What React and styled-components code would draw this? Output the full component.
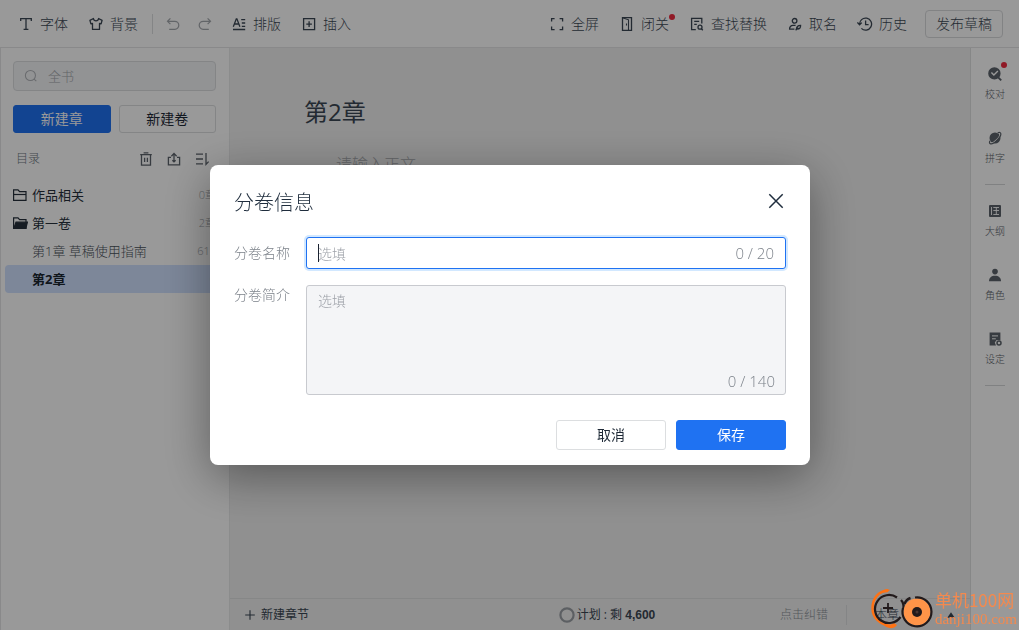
import React, { useState } from "react";
import styled, { createGlobalStyle, css } from "styled-components";

const GlobalStyle = createGlobalStyle`
  * {
    box-sizing: border-box;
  }

  body {
    margin: 0;
    background: #fff;
    color: #3b4754;
    font-family: "Open Sans", "Noto Sans CJK SC", sans-serif;
    font-size: 14px;
    font-weight: 300;
    line-height: 20px;
  }

  button, input, textarea {
    font: inherit;
    color: inherit;
    margin: 0;
  }

  button {
    padding: 0;
    border: none;
    background: none;
    cursor: pointer;
    white-space: nowrap;
  }
`;

/* ---------- layout ---------- */

const Page = styled.div`
  display: flex;
  flex-direction: column;
  min-height: 100vh;
`;

const Toolbar = styled.header`
  display: flex;
  align-items: center;
  justify-content: space-between;
  height: 48px;
  padding: 0 16px 0 18px;
  border-bottom: 1px solid #e4e5e6;
`;

const Group = styled.div`
  display: flex;
  align-items: center;
  gap: ${(props) => props.$gap ?? 20}px;
`;

const ToolButton = styled.button`
  position: relative;
  display: flex;
  align-items: center;
  gap: 6px;
  height: 28px;
  color: ${(props) => (props.$muted ? "#a4a8ad" : "#3b4754")};
`;

const ToolDivider = styled.span`
  width: 1px;
  height: 20px;
  margin: 0 12px 0 14px;
  background: #dcdedf;
`;

const PublishButton = styled.button`
  width: 78px;
  height: 28px;
  border: 1px solid #d9dbdd;
  border-radius: 4px;
`;

const Dot = styled.i`
  position: absolute;
  top: 4px;
  right: -6px;
  width: 6px;
  height: 6px;
  border-radius: 50%;
  background: #f02c40;
`;

const Body = styled.div`
  display: flex;
  flex: 1;
`;

/* ---------- sidebar ---------- */

const Sidebar = styled.aside`
  width: 230px;
  padding: 13px 0 0 4px;
  border-left: 1px solid #e4e5e6;
  border-right: 1px solid #e8e9ea;
`;

const SidebarTop = styled.div`
  padding: 0 13px 0 8px;
`;

const SearchBox = styled.label`
  display: flex;
  align-items: center;
  gap: 10px;
  height: 30px;
  padding: 0 10px;
  border: 1px solid #dcdee0;
  border-radius: 4px;
  background: #f4f5f7;
  color: #b0b3b8;

  input {
    width: 100%;
    min-width: 0;
    padding: 0;
    border: none;
    outline: none;
    background: none;
    font-size: 13px;
  }

  input::placeholder {
    color: #a3a7ac;
    opacity: 1;
  }
`;

const CreateRow = styled.div`
  display: flex;
  gap: 8px;
  margin-top: 14px;
`;

const Button = styled.button`
  flex: 1;
  height: ${(props) => props.$height || 28}px;
  border: 1px solid #dcdee0;
  border-radius: 3px;
  background: #fff;
  color: #1f2a37;
  font-weight: 400;

  ${(props) =>
    props.$primary &&
    css`
      border-color: #1f72f2;
      background: #1f72f2;
      color: #fff;
    `}
`;

const CatalogHead = styled.div`
  display: flex;
  align-items: center;
  justify-content: space-between;
  height: 28px;
  margin: 12px 0 8px;
  padding: 0 6px 0 3px;
  font-size: 12px;
  color: #70777f;
`;

const IconButton = styled.button`
  display: flex;
  color: #5c636b;
`;

const List = styled.ul`
  margin: 0;
  padding: 0;
  list-style: none;
`;

const Row = styled.li`
  display: grid;
  grid-template-columns: 16px 1fr auto;
  align-items: center;
  gap: 4px;
  height: 28px;
  padding: 0 13px 0 7px;
  border-radius: 4px 0 0 4px;
  font-size: 13px;
  font-weight: ${(props) => (props.$chapter ? 300 : 400)};
  color: ${(props) => (props.$chapter ? "#4a525b" : "#26303b")};

  small {
    font-size: 11px;
    font-weight: 300;
    color: #a0a4a9;
  }

  ${(props) =>
    props.$active &&
    css`
      background: #d0e1ff;
      color: #1a2530;
      font-weight: 700;
    `}
`;

/* ---------- editor ---------- */

const Editor = styled.main`
  display: flex;
  flex: 1;
  flex-direction: column;
  background: #f0f0f0;
`;

const Paper = styled.article`
  flex: 1;
  padding: 46px 74px 0;

  h1 {
    margin: 0;
    font-size: 24px;
    font-weight: 400;
    line-height: 36px;
    color: #3b4754;
  }

  p {
    margin: 21px 0 0;
    font-size: 16px;
    line-height: 26px;
    text-indent: 2em;
    color: #a8abaf;
  }
`;

const StatusBar = styled.footer`
  display: grid;
  grid-template-columns: 1fr auto 1fr;
  align-items: center;
  height: 32px;
  padding-left: 14px;
  border-top: 1px solid #e0e1e2;
  font-size: 12px;

  b {
    font-family: "Liberation Sans", sans-serif;
    font-weight: 700;
  }
`;

const StatusButton = styled.button`
  display: flex;
  align-items: center;
  gap: ${(props) => props.$gap || 5}px;
  font-weight: 400;
`;

const StatusEnd = styled.div`
  display: flex;
  align-items: center;
  justify-content: flex-end;
  gap: 18px;
  color: #3b4754;

  a {
    color: #8d9298;
    text-decoration: none;
  }

  i {
    width: 1px;
    height: 20px;
    background: #dcdedf;
  }
`;

const ChapterCount = styled.button`
  display: flex;
  justify-content: space-between;
  align-items: center;
  width: 105px;
  padding: 0 14px 0 10px;
`;

/* ---------- right rail ---------- */

const Rail = styled.nav`
  width: 49px;
  padding-top: 18px;
  border-left: 1px solid #e0e1e2;

  hr {
    width: 20px;
    height: 1px;
    margin: 19px auto 18px;
    border: none;
    background: #d5d7d9;
  }
`;

const RailButton = styled.button`
  position: relative;
  display: flex;
  flex-direction: column;
  align-items: center;
  gap: 6px;
  width: 20px;
  margin: 0 auto;
  font-size: 10px;
  line-height: 13px;
  color: #5c636b;

  & + & {
    margin-top: 29px;
  }

  ${Dot} {
    top: -4px;
    right: -2px;
  }
`;

/* ---------- dialog ---------- */

const Overlay = styled.div`
  position: fixed;
  inset: 0;
  display: flex;
  align-items: center;
  justify-content: center;
  padding-left: 1px;
  background: rgba(0, 0, 0, 0.4);
`;

const Dialog = styled.form`
  width: 600px;
  max-width: 100%;
  padding: 23px 24px 15px;
  border-radius: 8px;
  background: #fff;
  box-shadow: 0 12px 48px rgba(0, 0, 0, 0.4);
`;

const DialogHead = styled.div`
  display: flex;
  align-items: flex-start;
  justify-content: space-between;
  margin-bottom: 19px;
  padding-right: 2px;

  h2 {
    margin: 0;
    font-size: 20px;
    font-weight: 300;
    line-height: 30px;
    color: #1f2d3d;
  }

  button {
    padding-top: 5px;
    color: #1f2d3d;
  }
`;

const Field = styled.div`
  display: grid;
  grid-template-columns: 72px 1fr;
  margin-bottom: 16px;

  label {
    padding-top: ${(props) => (props.$multiline ? 0 : 6)}px;
    color: #7c828a;
  }
`;

const Control = styled.div`
  position: relative;
  display: flex;

  input,
  textarea {
    display: block;
    width: 100%;
    border: 1px solid #c8cacf;
    border-radius: 3px;
    outline: none;
    background: #f4f5f7;
    resize: none;
  }

  input {
    height: 32px;
    padding: 0 60px 0 11px;
    border-color: #1f72f2;
    background: #fff;
    box-shadow: 0 0 0 2px #d2e8ff;
  }

  textarea {
    height: 110px;
    padding: 5px 11px;
  }

  ::placeholder {
    color: #9ea2a9;
    opacity: 1;
  }
`;

const Counter = styled.span`
  position: absolute;
  right: ${(props) => (props.$low ? 11 : 12)}px;
  bottom: ${(props) => (props.$low ? 4 : 6)}px;
  font-size: 15px;
  color: #7c828a;
`;

const Caret = styled.span`
  position: absolute;
  top: 7px;
  left: 12px;
  width: 1px;
  height: 18px;
  background: #1a2230;
`;

const Actions = styled.div`
  display: flex;
  justify-content: flex-end;
  gap: 10px;
  padding-top: 9px;

  button {
    flex: 0 0 110px;
  }
`;

/* ---------- site mark ---------- */

const SiteMark = styled.div`
  position: fixed;
  right: 2px;
  bottom: 0;
  display: flex;
  align-items: center;
  color: #f4894e;
  white-space: nowrap;

  strong {
    display: block;
    font: 400 17px/20px "Noto Sans CJK SC", sans-serif;
  }

  span {
    display: block;
    font: 400 15px/18px "Liberation Serif", serif;
  }
`;

/* ---------- icons ---------- */

const Icon = ({ size = 16, width = 1.3, children }) => (
  <svg
    width={size}
    height={size}
    viewBox="0 0 16 16"
    fill="none"
    stroke="currentColor"
    strokeWidth={width}
    aria-hidden="true"
  >
    {children}
  </svg>
);

const FontIcon = () => (
  <Icon>
    <path d="M2.7 5V2.7h10.6V5M8 2.7v10.8M5.6 13.4h4.8" />
  </Icon>
);

const ShirtIcon = () => (
  <Icon>
    <path
      strokeLinejoin="round"
      d="M5.4 2.5 1.9 4.4l1 3.4 1.6-.4v6h7v-6l1.6.4 1-3.4-3.5-1.9C10.200 5.600 5.800 5.600 5.400 2.500Z"
    />
  </Icon>
);

const UndoIcon = () => (
  <Icon width={1.2}>
    <path d="M5.4 2.4 2.5 5.3l2.9 2.9M2.6 5.3h7.2a4 4 0 0 1 0 8H4.2" />
  </Icon>
);

const RedoIcon = () => (
  <Icon width={1.2}>
    <path d="m10.6 2.4 2.9 2.9-2.9 2.9M13.4 5.3H6.2a4 4 0 0 0 0 8h5.6" />
  </Icon>
);

const TypesetIcon = () => (
  <Icon>
    <path d="m2.3 10.8 3-8h.6l3 8M3.4 8h4.4M10.2 3.6h4M10.8 7h3.4M10.8 10.3h3.4M2 13.5h12.2" />
  </Icon>
);

const InsertIcon = () => (
  <Icon>
    <path d="M2.6 2.6h11v11h-11zM8.1 5.3v5.6M5.3 8.1h5.6" />
  </Icon>
);

const FullscreenIcon = () => (
  <Icon>
    <path d="M2.6 5.6V2.6h3M10.6 2.6h3v3M13.6 10.6v3h-3M5.6 13.6h-3v-3" />
  </Icon>
);

const DoorIcon = () => (
  <Icon>
    <path d="M3.500 1.600h9v12.800h-9z" />
    <path d="m3.600 1.800 5.900 2v10.500M7.500 7.500v2" strokeWidth="1.100" />
  </Icon>
);

const FindIcon = () => (
  <Icon>
    <path d="M6.8 13.6H2.6V2.4h10.2v5M5.2 5.4h5M5.2 8.4h2.6" />
    <circle cx="11" cy="11.2" r="2" />
    <path d="m12.4 12.7 1.4 1.5" />
  </Icon>
);

const NamingIcon = () => (
  <Icon>
    <circle cx="7.6" cy="4.8" r="2.3" />
    <path d="M8.6 9.4H6a3.4 3.4 0 0 0-3.4 3.8h4.800M9.4 13.2c0-2.5 1.500-3.800 4.200-3.900.1 2.200-.9 3.800-3.200 3.800M8.600 14.200l2.600-2.600" />
  </Icon>
);

const HistoryIcon = () => (
  <Icon>
    <path d="M2.6 8.6A6 6 0 1 1 4.4 12.4M.4 6.4l2.2 2.4 2.2-2.2M8.6 4.6v4h3" />
  </Icon>
);

const SearchIcon = () => (
  <Icon width={1.2}>
    <circle cx="7.4" cy="7.4" r="5.8" />
    <path d="m11.6 11.6 2.6 2.4" />
  </Icon>
);

const TrashIcon = () => (
  <Icon>
    <path d="M2.2 3.6h11.6M5.6 1.8h4.8M3.5 3.6v10.6h9V3.6M6.6 6.8v4.2M9.4 6.8v4.2" />
  </Icon>
);

const ExportIcon = () => (
  <Icon>
    <path d="M5 6.4H2.4v7.4h11.2V6.4H11M8 10.8V3M5.4 5.2 8 2.4l2.6 2.8M6.4 9.2 8 10.8l1.6-1.6" />
  </Icon>
);

const SortIcon = () => (
  <Icon>
    <path d="M2 3.2h7M2 8h7M2 12.8h7M12 2v11.4l2.6-2.8" />
  </Icon>
);

const FolderIcon = ({ open }) => (
  <Icon width={1.2}>
    <path d="M1.600 13.400V2.800h4.400l1.600 1.800h6.400v8.800z" />
    {open ? (
      <path d="M4 7.200h11.400l-1.600 6.200H1.800z" fill="currentColor" />
    ) : (
      <path d="M1.600 7.500h12.400" />
    )}
  </Icon>
);

const ProofIcon = () => (
  <Icon>
    <path
      fill="currentColor"
      stroke="none"
      fillRule="evenodd"
      d="M7.4 1.2a6.2 6.2 0 1 1 0 12.4 6.2 6.2 0 0 1 0-12.4ZM3.9 7l3 3 4.5-4.5-1-1-3.5 3.5-2-2z"
    />
    <path d="m11.2 11.4 3 3" strokeWidth="2" />
  </Icon>
);

const PlanetIcon = () => (
  <Icon>
    <circle cx="8" cy="8" r="5.500" fill="currentColor" stroke="none" />
    <g transform="rotate(-45 8 8)">
      <path d="M1.600 8.600c1.800 2.400 11 2.400 12.800 0" stroke="#fff" strokeWidth="1" />
      <path
        strokeWidth="1.200"
        d="M2.500 6.300C.6 7 .2 8 .8 9c1.600 2.700 12.800 2.700 14.400 0 .6-1 .2-2-1.700-2.700"
      />
    </g>
  </Icon>
);

const OutlineIcon = () => (
  <Icon>
    <rect x="2" y="2" width="12" height="12" rx="1" fill="currentColor" stroke="none" />
    <path
      stroke="#fff"
      strokeWidth=".9"
      d="M4.500 4v8M6.300 4.500H12M6.300 7.500H12M6.300 11.500H12M9.300 4.500v7"
    />
  </Icon>
);

const RoleIcon = () => (
  <Icon>
    <circle cx="8" cy="4.600" r="2.800" fill="currentColor" stroke="none" />
    <path d="M2 14.200c0-3.400 2.400-5.400 6-5.400s6 2 6 5.400z" fill="currentColor" stroke="none" />
  </Icon>
);

const SettingIcon = () => (
  <Icon>
    <path d="M2.6 1.6h10.8v7.6L9.6 9l-1.8 2.6 1.2 3H2.6z" fill="currentColor" stroke="none" />
    <path d="M5 4.9h6M5 7.8h3.8" stroke="#fff" strokeWidth="1" />
    <circle cx="12" cy="12" r="2" strokeWidth="1.5" />
  </Icon>
);

const CloseIcon = () => (
  <Icon>
    <path d="m1.3 1.3 13.4 13.4M14.7 1.3 1.3 14.7" strokeWidth="1.5" />
  </Icon>
);

const PlusIcon = () => (
  <Icon size={12} width={1.5}>
    <path d="M8 1.6v12.8M1.6 8h12.8" />
  </Icon>
);

const RingIcon = () => (
  <Icon>
    <circle cx="8" cy="8" r="6.6" stroke="#9a9fa5" strokeWidth="2.2" />
  </Icon>
);

const UpIcon = () => (
  <Icon size={10}>
    <path d="m8 3.5 6 9H2z" fill="currentColor" stroke="none" />
  </Icon>
);

const MarkLogo = () => (
  <svg width="65" height="42" viewBox="0 0 65 42" fill="none" aria-hidden="true">
    <path
      d="M18 2.500C8 3 2.500 11 2.500 20.500 2.500 29 9 36 20 38"
      stroke="#ff7214"
      strokeWidth="2.400"
    />
    <path d="M8 7c3-4 8-7 12-5l-3 2.500c-3-.5-6 .5-9 2.500ZM12 35c5 3 9 2 12 0l3 2c-4 5-10 4-15-2Z" fill="#ff7214" />
    <path
      d="M27 9.500A14 14 0 1 0 30.500 29"
      stroke="#221a1b"
      strokeWidth="2.200"
    />
    <path d="M18 15v10M13 20h10" stroke="#221a1b" strokeWidth="1.800" />
    <path d="M31 12c2 2 3 5 2.500 9M34.500 16c1-3 3-5 6-6" stroke="#221a1b" strokeWidth="2.400" />
    <circle cx="47" cy="24" r="13.500" fill="#ff9448" />
    <path
      d="M45 9.500A14.500 14.500 0 1 1 33 20"
      stroke="#221a1b"
      strokeWidth="2.200"
    />
    <circle cx="47" cy="24" r="5" fill="#221a1b" />
    <circle cx="47" cy="24" r="1.500" fill="#4a3530" />
  </svg>
);

/* ---------- data ---------- */

const rightTools = [
  { label: "全屏", Glyph: FullscreenIcon },
  { label: "闭关", Glyph: DoorIcon, dot: true },
  { label: "查找替换", Glyph: FindIcon },
  { label: "取名", Glyph: NamingIcon },
  { label: "历史", Glyph: HistoryIcon },
];

const catalog = [
  { name: "作品相关", count: "0章", icon: <FolderIcon /> },
  { name: "第一卷", count: "2章", icon: <FolderIcon open /> },
  { name: "第1章 草稿使用指南", count: "611", chapter: true },
  { name: "第2章", count: "0", chapter: true, active: true },
];

const Tool = ({ label, Glyph, dot }) => (
  <ToolButton type="button">
    <Glyph />
    {label}
    {dot && <Dot />}
  </ToolButton>
);

const RailItem = ({ label, Glyph, dot }) => (
  <RailButton type="button">
    <Glyph />
    {label}
    {dot && <Dot />}
  </RailButton>
);

const VolumeDialog = ({ onClose }) => {
  const [name, setName] = useState("");
  const [intro, setIntro] = useState("");

  const handleSubmit = (e) => {
    e.preventDefault();
    onClose();
  };

  return (
    <Overlay>
      <Dialog role="dialog" aria-labelledby="volume-title" onSubmit={handleSubmit}>
        <DialogHead>
          <h2 id="volume-title">分卷信息</h2>
          <button type="button" aria-label="关闭" onClick={onClose}>
            <CloseIcon />
          </button>
        </DialogHead>
        <Field>
          <label htmlFor="volume-name">分卷名称</label>
          <Control>
            <input
              id="volume-name"
              placeholder="选填"
              maxLength={20}
              value={name}
              onChange={(e) => setName(e.target.value)}
            />
            {!name && <Caret />}
            <Counter>{name.length} / 20</Counter>
          </Control>
        </Field>
        <Field $multiline>
          <label htmlFor="volume-intro">分卷简介</label>
          <Control>
            <textarea
              id="volume-intro"
              placeholder="选填"
              maxLength={140}
              value={intro}
              onChange={(e) => setIntro(e.target.value)}
            />
            <Counter $low>{intro.length} / 140</Counter>
          </Control>
        </Field>
        <Actions>
          <Button type="button" $height={30} onClick={onClose}>
            取消
          </Button>
          <Button type="submit" $height={30} $primary>
            保存
          </Button>
        </Actions>
      </Dialog>
    </Overlay>
  );
};

const App = () => {
  const [showDialog, setShowDialog] = useState(true);

  return (
    <>
      <GlobalStyle />
      <Page>
        <Toolbar>
          <Group $gap={18}>
            <Group $gap={16}>
              <Group $gap={0}>
                <Group>
                  <Tool label="字体" Glyph={FontIcon} />
                  <Tool label="背景" Glyph={ShirtIcon} />
                </Group>
                <ToolDivider />
                <ToolButton type="button" $muted aria-label="撤销">
                  <UndoIcon />
                </ToolButton>
              </Group>
              <ToolButton type="button" $muted aria-label="重做">
                <RedoIcon />
              </ToolButton>
            </Group>
            <Group>
              <Tool label="排版" Glyph={TypesetIcon} />
              <Tool label="插入" Glyph={InsertIcon} />
            </Group>
          </Group>
          <Group $gap={18}>
            <Group>
              {rightTools.map((tool) => (
                <Tool key={tool.label} {...tool} />
              ))}
            </Group>
            <PublishButton type="button">发布草稿</PublishButton>
          </Group>
        </Toolbar>

        <Body>
          <Sidebar>
            <SidebarTop>
              <SearchBox>
                <SearchIcon />
                <input aria-label="搜索" placeholder="全书" />
              </SearchBox>
              <CreateRow>
                <Button type="button" $primary>
                  新建章
                </Button>
                <Button type="button" onClick={() => setShowDialog(true)}>
                  新建卷
                </Button>
              </CreateRow>
              <CatalogHead>
                目录
                <Group $gap={12}>
                  <IconButton type="button" aria-label="回收站">
                    <TrashIcon />
                  </IconButton>
                  <IconButton type="button" aria-label="导出">
                    <ExportIcon />
                  </IconButton>
                  <IconButton type="button" aria-label="排序">
                    <SortIcon />
                  </IconButton>
                </Group>
              </CatalogHead>
            </SidebarTop>
            <List>
              {catalog.map((item) => (
                <Row key={item.name} $chapter={item.chapter} $active={item.active}>
                  <Group>{item.icon}</Group>
                  {item.name}
                  <small>{item.count}</small>
                </Row>
              ))}
            </List>
          </Sidebar>

          <Editor>
            <Paper>
              <h1>第2章</h1>
              <p>请输入正文</p>
            </Paper>
            <StatusBar>
              <StatusButton type="button">
                <PlusIcon />
                新建章节
              </StatusButton>
              <StatusButton type="button" $gap={2}>
                <RingIcon />
                <span>
                  计划 : 剩 <b>4,600</b>
                </span>
              </StatusButton>
              <StatusEnd>
                <a href="#feedback">点击纠错</a>
                <i />
                <ChapterCount type="button">
                  本章
                  <UpIcon />
                </ChapterCount>
              </StatusEnd>
            </StatusBar>
          </Editor>

          <Rail>
            <RailItem label="校对" Glyph={ProofIcon} dot />
            <RailItem label="拼字" Glyph={PlanetIcon} />
            <hr />
            <RailItem label="大纲" Glyph={OutlineIcon} />
            <RailItem label="角色" Glyph={RoleIcon} />
            <RailItem label="设定" Glyph={SettingIcon} />
            <hr />
          </Rail>
        </Body>
      </Page>

      {showDialog && <VolumeDialog onClose={() => setShowDialog(false)} />}

      <SiteMark>
        <MarkLogo />
        <div>
          <strong>单机100网</strong>
          <span>danji100.com</span>
        </div>
      </SiteMark>
    </>
  );
};

export default App;
